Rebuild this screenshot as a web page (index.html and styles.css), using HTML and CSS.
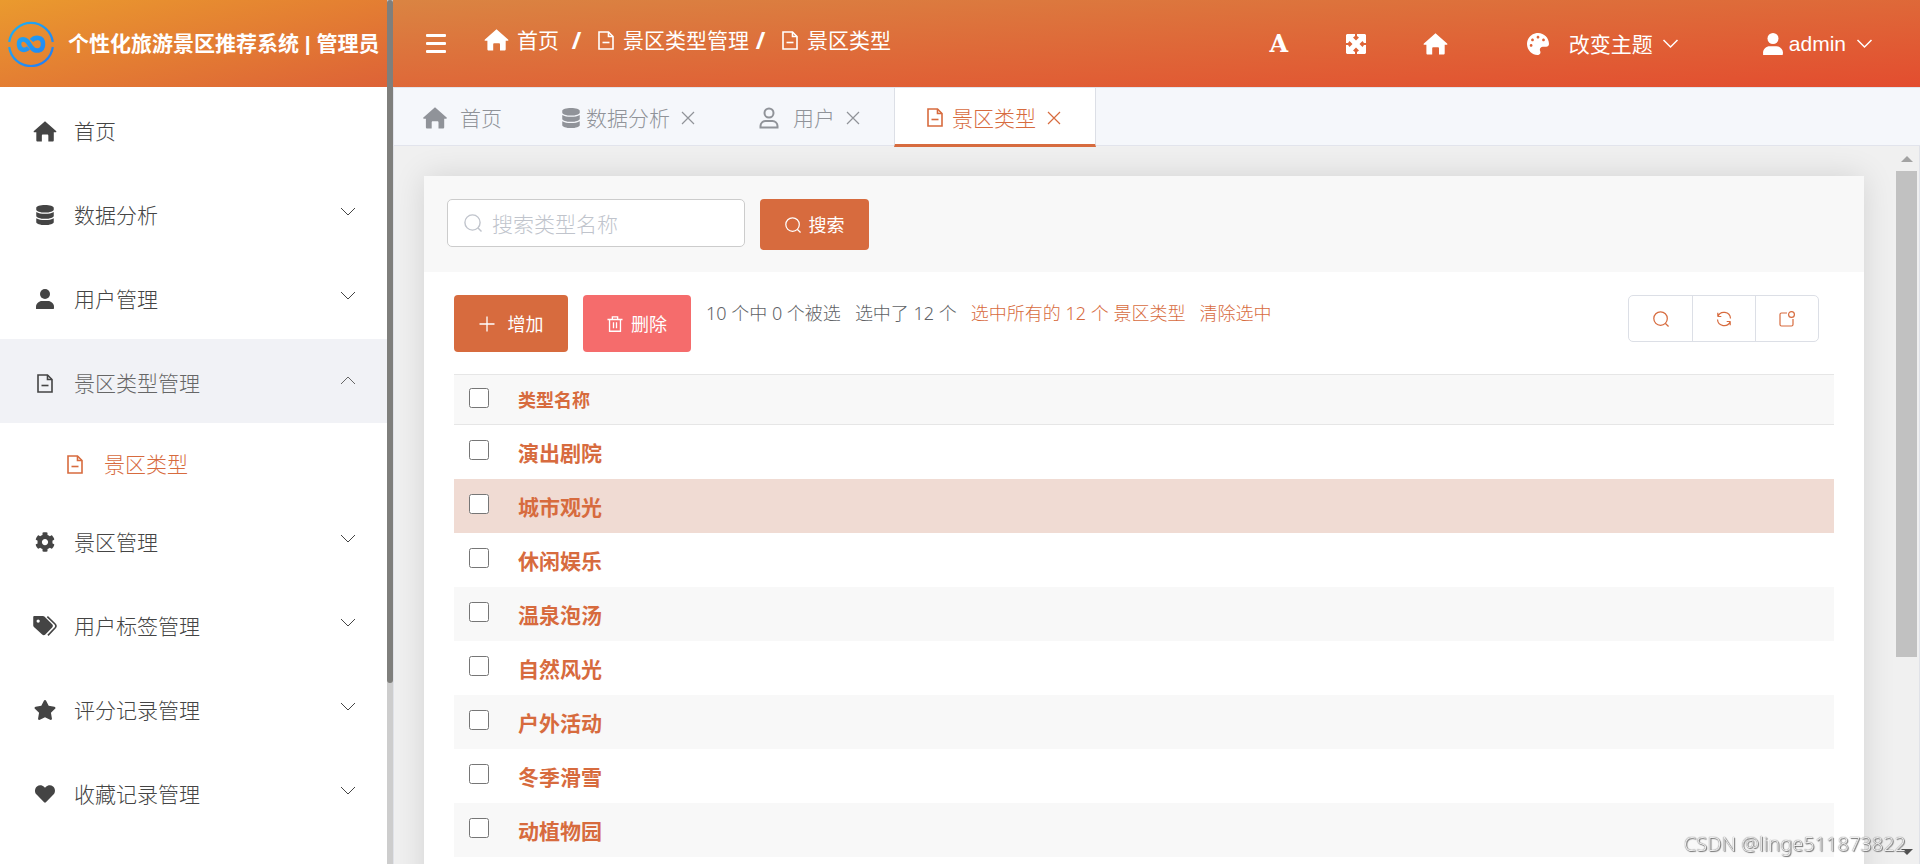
FILE: index.html
```html
<!DOCTYPE html>
<html lang="zh-CN">
<head>
<meta charset="utf-8">
<title>景区类型 | 个性化旅游景区推荐系统</title>
<link rel="stylesheet" href="styles.css">
</head>
<body>
<svg class="sprite" aria-hidden="true">
  <symbol id="i-home" viewBox="0 0 24 22"><path d="M12 .3 23.6 10.4c.6.6.3 1.4-.6 1.4h-1.800v8.400c0 .9-.5 1.400-1.400 1.400h-4.300v-6.200c0-.8-.4-1.200-1.200-1.200H9.900c-.8 0-1.200.4-1.200 1.200v6.200H4.300c-.9 0-1.400-.5-1.400-1.400v-8.400H1c-.9 0-1.200-.8-.6-1.400z"/></symbol>
  <symbol id="i-db" viewBox="0 0 448 512"><path d="M448 73.143v45.714C448 159.143 347.667 192 224 192S0 159.143 0 118.857V73.143C0 32.857 100.333 0 224 0s224 32.857 224 73.143zM448 176v102.857C448 319.143 347.667 352 224 352S0 319.143 0 278.857V176c48.125 33.143 136.208 48.572 224 48.572S399.874 209.143 448 176zm0 160v102.857C448 479.143 347.667 512 224 512S0 479.143 0 438.857V336c48.125 33.143 136.208 48.572 224 48.572S399.874 369.143 448 336z"/></symbol>
  <symbol id="i-user" viewBox="0 0 18 20"><circle cx="9" cy="5" r="5"/><path d="M0 20v-2.500C0 14.500 3 12 6 12h6c3 0 6 2.500 6 5.500V19c0 .7-.3 1-1 1z"/></symbol>
  <symbol id="i-user-o" viewBox="0 0 20 22"><g fill="none" stroke="currentColor" stroke-width="2"><circle cx="10" cy="6" r="4.500"/><path d="M1.500 20.500v-1.500c0-3 2.500-5 5-5h7c2.500 0 5 2 5 5v1.500z"/></g></symbol>
  <symbol id="i-doc" viewBox="0 0 16 19"><g fill="none" stroke="currentColor" stroke-width="1.600"><path d="M1 1h9.500L15 5.500V18H1z"/><path d="M10.500 1v4.500H15"/><path d="M4.500 11.500h7"/></g></symbol>
  <symbol id="i-cog" viewBox="0 0 512 512"><path fill-rule="evenodd" d="M487.400 315.700l-42.600-24.600c4.300-23.200 4.300-47 0-70.200l42.600-24.600c4.900-2.800 7.100-8.600 5.500-14-11.100-35.600-30-67.800-54.700-94.600-3.800-4.100-10-5.100-14.800-2.300L380.800 110c-17.900-15.400-38.500-27.300-60.800-35.100V25.800c0-5.600-3.900-10.500-9.400-11.700-36.700-8.200-74.300-7.800-109.200 0-5.500 1.200-9.400 6.100-9.400 11.700V75c-22.200 7.900-42.800 19.800-60.800 35.100L88.700 85.500c-4.900-2.800-11-1.900-14.800 2.300-24.700 26.700-43.600 58.900-54.700 94.600-1.700 5.400.6 11.200 5.500 14L67.300 221c-4.300 23.200-4.300 47 0 70.200l-42.600 24.600c-4.900 2.800-7.100 8.600-5.500 14 11.100 35.600 30 67.800 54.700 94.600 3.800 4.100 10 5.100 14.800 2.300l42.600-24.600c17.900 15.400 38.500 27.300 60.800 35.100v49.200c0 5.600 3.900 10.500 9.400 11.700 36.700 8.200 74.300 7.800 109.200 0 5.500-1.200 9.400-6.100 9.400-11.700v-49.200c22.200-7.900 42.800-19.800 60.800-35.100l42.600 24.600c4.900 2.800 11 1.900 14.800-2.300 24.700-26.700 43.600-58.900 54.700-94.600 1.500-5.500-.7-11.300-5.600-14.100zM256 336c-44.100 0-80-35.900-80-80s35.900-80 80-80 80 35.900 80 80-35.900 80-80 80z"/></symbol>
  <symbol id="i-tags" viewBox="0 0 20 17"><path fill-rule="evenodd" d="M.8 0h7.400c.5 0 .9.200 1.300.5l6.600 6.600c.8.800.8 1.900 0 2.700l-5.800 6c-.8.800-1.900.8-2.700 0L.6 9.300C.2 8.900 0 8.500 0 8V.8C0 .3.300 0 .8 0zM4.200 2.900a1.400 1.400 0 1 0 0 2.800 1.400 1.400 0 0 0 0-2.800z"/><path fill="none" stroke="currentColor" stroke-width="1.400" d="M12 .5l6.500 6.300c1 1 1 2.300 0 3.400L12.500 16.500"/></symbol>
  <symbol id="i-star" viewBox="0 0 576 512"><path d="M259.300 17.800L194 150.200 47.900 171.500c-26.200 3.800-36.700 36.100-17.700 54.600l105.700 103-25 145.500c-4.500 26.300 23.200 46 46.400 33.700L288 439.600l130.700 68.700c23.200 12.200 50.900-7.400 46.400-33.700l-25-145.500 105.700-103c19-18.500 8.500-50.800-17.700-54.600L382 150.200 316.700 17.800c-11.700-23.600-45.600-23.900-57.400 0z"/></symbol>
  <symbol id="i-heart" viewBox="0 0 512 512"><path d="M462.300 62.600C407.500 15.900 326 24.300 275.700 76.200L256 96.500l-19.700-20.300C186.100 24.300 104.500 15.900 49.700 62.600c-62.800 53.600-66.100 149.800-9.900 207.900l193.500 199.800c12.500 12.900 32.800 12.900 45.300 0l193.500-199.800c56.300-58.100 53-154.300-9.800-207.900z"/></symbol>
  <symbol id="i-palette" viewBox="0 0 512 512"><path fill-rule="evenodd" d="M204.300 5C104.900 24.400 24.800 104.300 5.200 203.400c-37 187 131.700 326.400 258.800 306.700 41.200-6.400 61.400-54.600 42.500-91.700-23.100-45.400 9.900-98.400 60.900-98.400h79.700c35.800 0 64.800-29.600 64.900-65.300C511.500 97.100 368.100-26.900 204.300 5zM96 320c-17.700 0-32-14.300-32-32s14.300-32 32-32 32 14.300 32 32-14.300 32-32 32zm32-128c-17.700 0-32-14.300-32-32s14.300-32 32-32 32 14.300 32 32-14.300 32-32 32zm128-64c-17.700 0-32-14.300-32-32s14.300-32 32-32 32 14.300 32 32-14.300 32-32 32zm128 64c-17.700 0-32-14.300-32-32s14.300-32 32-32 32 14.300 32 32-14.300 32-32 32z"/></symbol>
  <symbol id="i-expand" viewBox="0 0 20 20"><path d="M1 0H9v2L7 3.500 10 6.500 13 3.500 11 2V0h8l1 1V9H18L16.500 7l-3 3 3 3L18 11h2v8l-1 1H11V18l2-1.500-3-3-3 3L9 18v2H1l-1-1V11H2l1.500 2 3-3-3-3L2 9H0V1z"/></symbol>
  <symbol id="i-down" viewBox="0 0 16 10"><path fill="none" stroke="currentColor" d="M1 1l7 7 7-7"/></symbol>
  <symbol id="i-close" viewBox="0 0 14 14"><path fill="none" stroke="currentColor" stroke-width="1.200" d="M1 1l12 12M13 1L1 13"/></symbol>
  <symbol id="i-search" viewBox="0 0 18 18"><g fill="none" stroke="currentColor" stroke-width="1.400"><circle cx="8.500" cy="8.500" r="7.600"/><path d="M14 14l3.500 3.500"/></g></symbol>
  <symbol id="i-plus" viewBox="0 0 16 16"><path fill="none" stroke="currentColor" stroke-width="1.300" d="M8 .5v15M.5 8h15"/></symbol>
  <symbol id="i-trash" viewBox="0 0 16 17"><path fill="none" stroke="currentColor" stroke-width="1.400" d="M0 3.700h16M2.200 3.700v12.500h11.600V3.700M5.200 3.500V.9h5.600v2.600M6.400 6.700v6.300M9.600 6.700v6.300"/></symbol>
  <symbol id="i-refresh" viewBox="0 0 16 16"><g fill="none" stroke="currentColor" stroke-width="1.200"><path d="M1.500 5.500h3.800M1.800 1.800v3.700A6.600 6.600 0 0 1 14.500 7.500M14.500 10.500h-3.800M14.200 14.200v-3.700A6.600 6.600 0 0 1 1.500 8.500"/></g></symbol>
  <symbol id="i-badge" viewBox="0 0 16 16"><g fill="none" stroke="currentColor" stroke-width="1.200"><path d="M8 2H2.500C1.500 2 1 2.500 1 3.500v10c0 1 .5 1.500 1.500 1.500h10c1 0 1.500-.5 1.500-1.500V8"/><circle cx="12.500" cy="3.500" r="2.900"/></g></symbol>
</svg>

<div class="app">
  <aside class="side">
    <header class="brand">
      <svg class="logo" viewBox="0 0 46 46" aria-hidden="true">
        <defs><linearGradient id="lg" x1="0" y1="0" x2="46" y2="46" gradientUnits="userSpaceOnUse"><stop offset="0" stop-color="#1fb4f0"/><stop offset="1" stop-color="#2478f5"/></linearGradient></defs>
        <g fill="none" stroke="url(#lg)"><path stroke-width="2.200" d="M1.200 21A22 22 0 0 1 44.800 21M1.200 26A22 22 0 0 0 44.800 26"/><path stroke-width="4.600" d="M23.500 19.500c3-3.500 11.500-4.500 11.500 3.500s-8 8-11.500 3.500l-4-6c-3.500-3.500-8.500-2.500-8.500 2.500s4.500 8 9.500 4"/></g>
      </svg>
      <h1 class="brand-name">个性化旅游景区推荐系统 | 管理员</h1>
    </header>
    <nav class="menu">
      <a class="item" href="#"><svg class="ic ic-home"><use href="#i-home"/></svg><span>首页</span></a>
      <a class="item" href="#"><svg class="ic"><use href="#i-db"/></svg><span>数据分析</span><svg class="arrow"><use href="#i-down"/></svg></a>
      <a class="item" href="#"><svg class="ic"><use href="#i-user"/></svg><span>用户管理</span><svg class="arrow"><use href="#i-down"/></svg></a>
      <a class="item open" href="#"><svg class="ic ic-doc"><use href="#i-doc"/></svg><span>景区类型管理</span><svg class="arrow"><use href="#i-down"/></svg></a>
      <a class="item sub" href="#"><svg class="ic ic-doc"><use href="#i-doc"/></svg><span>景区类型</span></a>
      <a class="item" href="#"><svg class="ic"><use href="#i-cog"/></svg><span>景区管理</span><svg class="arrow"><use href="#i-down"/></svg></a>
      <a class="item" href="#"><svg class="ic"><use href="#i-tags"/></svg><span>用户标签管理</span><svg class="arrow"><use href="#i-down"/></svg></a>
      <a class="item" href="#"><svg class="ic"><use href="#i-star"/></svg><span>评分记录管理</span><svg class="arrow"><use href="#i-down"/></svg></a>
      <a class="item" href="#"><svg class="ic"><use href="#i-heart"/></svg><span>收藏记录管理</span><svg class="arrow"><use href="#i-down"/></svg></a>
    </nav>
  </aside>
  <div class="side-scroll"><div class="side-thumb"></div></div>

  <div class="main">
    <header class="top">
      <button class="fold" aria-label="折叠菜单"><i></i><i></i><i></i></button>
      <nav class="crumbs">
        <a href="#"><svg class="ic-crumb-home"><use href="#i-home"/></svg>首页</a><b>/</b>
        <a href="#"><svg class="ic-doc"><use href="#i-doc"/></svg>景区类型管理</a><b>/</b>
        <a href="#"><svg class="ic-doc"><use href="#i-doc"/></svg>景区类型</a>
      </nav>
      <div class="tools">
        <button class="tool font" aria-label="字体">A</button>
        <button class="tool" aria-label="全屏"><svg class="s20"><use href="#i-expand"/></svg></button>
        <button class="tool" aria-label="首页"><svg class="ic-crumb-home"><use href="#i-home"/></svg></button>
        <button class="tool theme"><svg class="s22"><use href="#i-palette"/></svg><span>改变主题</span><svg class="caret"><use href="#i-down"/></svg></button>
        <button class="tool account"><svg class="s22"><use href="#i-user"/></svg><span>admin</span><svg class="caret"><use href="#i-down"/></svg></button>
      </div>
    </header>

    <nav class="tabs">
      <a class="tab" href="#"><svg class="ic-tab-home"><use href="#i-home"/></svg><span class="wide">首页</span></a>
      <a class="tab" href="#"><svg class="s20"><use href="#i-db"/></svg><span>数据分析</span><svg class="close"><use href="#i-close"/></svg></a>
      <a class="tab" href="#"><svg class="s22"><use href="#i-user-o"/></svg><span class="wide">用户</span><svg class="close"><use href="#i-close"/></svg></a>
      <a class="tab active" href="#"><svg class="ic-doc"><use href="#i-doc"/></svg><span>景区类型</span><svg class="close"><use href="#i-close"/></svg></a>
    </nav>

    <div class="body">
      <main class="card">
        <form class="search">
          <label class="field"><svg class="s18"><use href="#i-search"/></svg><input type="text" placeholder="搜索类型名称" aria-label="搜索类型名称"></label>
          <button class="btn" type="button"><svg class="s16"><use href="#i-search"/></svg>搜索</button>
        </form>
        <section class="content">
          <div class="actions">
            <button class="btn add"><svg class="s16"><use href="#i-plus"/></svg>增加</button>
            <button class="btn del"><svg class="s16"><use href="#i-trash"/></svg>删除</button>
            <p class="info"><span>10 个中 0 个被选</span><span>选中了 12 个</span><a href="#">选中所有的 12 个 景区类型</a><a href="#">清除选中</a></p>
            <div class="group">
              <button aria-label="搜索"><svg class="s16"><use href="#i-search"/></svg></button>
              <button aria-label="刷新"><svg class="s16"><use href="#i-refresh"/></svg></button>
              <button aria-label="新窗口"><svg class="s16"><use href="#i-badge"/></svg></button>
            </div>
          </div>
          <table class="grid">
            <thead><tr><th class="pick"><input type="checkbox" aria-label="全选"></th><th>类型名称</th></tr></thead>
            <tbody>
              <tr><td class="pick"><input type="checkbox" aria-label="演出剧院"></td><td><a href="#">演出剧院</a></td></tr>
              <tr class="hover"><td class="pick"><input type="checkbox" aria-label="城市观光"></td><td><a href="#">城市观光</a></td></tr>
              <tr><td class="pick"><input type="checkbox" aria-label="休闲娱乐"></td><td><a href="#">休闲娱乐</a></td></tr>
              <tr><td class="pick"><input type="checkbox" aria-label="温泉泡汤"></td><td><a href="#">温泉泡汤</a></td></tr>
              <tr><td class="pick"><input type="checkbox" aria-label="自然风光"></td><td><a href="#">自然风光</a></td></tr>
              <tr><td class="pick"><input type="checkbox" aria-label="户外活动"></td><td><a href="#">户外活动</a></td></tr>
              <tr><td class="pick"><input type="checkbox" aria-label="冬季滑雪"></td><td><a href="#">冬季滑雪</a></td></tr>
              <tr><td class="pick"><input type="checkbox" aria-label="动植物园"></td><td><a href="#">动植物园</a></td></tr>
            </tbody>
          </table>
        </section>
      </main>
      <div class="scroll"><span class="up"></span><div class="thumb"></div><span class="down"></span></div>
    </div>
  </div>
</div>
<div class="watermark">CSDN @linge511873822</div>
</body>
</html>
```
FILE: styles.css
```css
* { box-sizing: border-box; }
body {
  margin: 0;
  font-family: "Noto Sans", "Noto Sans CJK SC", sans-serif;
  font-weight: 300;
  font-size: 21px;
  line-height: 30px;
  color: #444;
  overflow: hidden;
}
a { color: inherit; text-decoration: none; }
button { font: inherit; color: inherit; border: 0; background: none; padding: 0; cursor: pointer; }
svg { flex: none; fill: currentColor; }
.sprite { position: absolute; width: 0; height: 0; }

.s16 { width: 16px; height: 16px; }
.s18 { width: 18px; height: 18px; }
.s20 { width: 20px; height: 20px; }
.s22 { width: 22px; height: 22px; }
.ic-crumb-home { width: 25px; height: 22px; }
.ic-tab-home { width: 24px; height: 22px; }

.app { display: flex; height: 100vh; }

/* sidebar */
.side { width: 387px; flex: none; background: #fff; overflow: hidden; }
.brand {
  display: flex;
  align-items: center;
  gap: 14px;
  height: 87px;
  padding-left: 8px;
  background: linear-gradient(to bottom right, #ea9a2e, #dd6237);
}
.logo { width: 46px; height: 46px; }
.brand-name {
  margin: 0;
  font-family: "Liberation Sans", "Noto Sans CJK SC", sans-serif;
  font-size: 21px;
  font-weight: 700;
  color: #fff;
  white-space: nowrap;
}
.item {
  display: flex;
  align-items: center;
  height: 84px;
  padding: 4px 31px 0 30px;
}
.ic { width: 30px; height: 20px; margin-right: 14px; }
.ic-home { height: 21px; }
.ic-doc { height: 19px; }
.arrow { width: 16px; height: 10px; margin: 0 0 6px auto; }
.open { background: #f1f2f6; color: #666; }
.open .ic { color: #444; }
.open .arrow { transform: rotate(180deg); }
.sub { height: 75px; padding: 7px 31px 0 60px; color: #d76b3e; }

.side-scroll { width: 6px; flex: none; background: #cdcdcd; }
.side-thumb { height: 79%; background: #7f7f7c; border-radius: 3px; }

/* header */
.main { flex: 1; min-width: 0; display: flex; flex-direction: column; }
.top {
  display: flex;
  align-items: center;
  height: 87px;
  flex: none;
  padding: 0 47px 0 33px;
  color: #fff;
  background: linear-gradient(to bottom right, #da8442, #e34d2f);
}
.fold { display: grid; gap: 5px; width: 20px; }
.fold i { height: 3px; border-radius: 1px; background: #fff; }
.crumbs { display: flex; align-items: center; margin: 0 auto 7px 38px; font-weight: 400; }
.crumbs a { display: flex; align-items: center; gap: 8px; }
.crumbs b { width: 11px; margin: 0 15px 0 12px; font-size: 23px; text-align: center; }
.crumbs a + b ~ a + b { margin-left: 6px; }
.crumbs .ic-doc { width: 18px; }
.tools { display: flex; align-items: center; }
.tool { display: flex; align-items: center; justify-content: center; min-width: 20px; }
.font { font-family: "DejaVu Serif", serif; font-weight: 700; font-size: 24px; }
.tools .tool + .tool { margin-left: 57px; }
.tools .tool + .theme { margin-left: 79px; }
.tools .tool + .account { margin-left: 83px; }
.theme span { margin: 0 9px 0 20px; font-weight: 400; }
.account span { margin: 0 10px 0 5px; font-family: "Liberation Sans", sans-serif; font-weight: 400; }
.caret { width: 17px; height: 10px; stroke-width: 1.500; }

/* tabs */
.tabs {
  position: relative;
  z-index: 1;
  display: flex;
  height: 59px;
  flex: none;
  background: #f5f7fb;
  border: solid #e2e4ec;
  border-width: 1px 0 1px 1px;
  color: #909399;
}
.tab { display: flex; align-items: center; height: 59px; padding: 0 34px 0 29px; gap: 5px; }
.tab:first-child { padding-right: 30px; }
.tab .wide { margin-left: 8px; }
.close { width: 14px; height: 14px; margin-left: 6px; }
.tab .ic-doc { width: 18px; margin-right: 3px; }
.active {
  padding: 3px 34px 0 31px;
  color: #d76b3e;
  background: #fff;
  border: solid #dcdfe6;
  border-width: 0 1px;
  border-bottom: 3px solid #d76b3e;
}

/* content */
.body { flex: 1; min-height: 0; display: flex; background: #f0f0f0; border: solid #e0e2e8; border-width: 0 1px; overflow: hidden; }
.card { flex: 1; align-self: flex-start; min-width: 0; margin: 30px 32px 0 30px; background: #fff; box-shadow: 0 0 30px rgba(0, 0, 0, .12); }
.search { display: flex; gap: 15px; height: 96px; padding: 23px; background: #f8f8f8; }
.field {
  display: flex;
  align-items: center;
  gap: 10px;
  width: 298px;
  height: 48px;
  padding: 0 16px;
  border: 1px solid #ccc;
  border-radius: 5px;
  background: #fff;
  color: #c0c4cc;
}
.field input { width: 100%; min-width: 0; padding: 2px 0 0; border: 0; outline: 0; background: none; font: inherit; color: #606266; }
.field input::placeholder { color: #c0c4cc; }
.btn {
  display: flex;
  align-items: center;
  justify-content: center;
  gap: 8px;
  width: 109px;
  height: 51px;
  border-radius: 4px;
  background: #d76b3e;
  color: #fff;
  font-size: 18px;
  font-weight: 400;
}
.content { padding: 23px 30px 80px; }
.actions { display: flex; align-items: flex-start; gap: 15px; }
.add, .del { height: 57px; }
.add { width: 114px; gap: 13px; }
.del { width: 108px; background: #f56c6c; }
.info { display: flex; gap: 14px; margin: 3px 0 0; font-size: 18px; color: #606266; white-space: nowrap; }
.info a { color: #d76b3e; }
.group { display: flex; margin: 0 15px 0 auto; border: 1px solid #dcdfe6; border-radius: 5px; color: #d76b3e; }
.group button { display: grid; place-items: center; width: 63px; height: 45px; }
.group button + button { border-left: 1px solid #dcdfe6; }

.grid { width: 100%; margin-top: 22px; border-collapse: collapse; color: #d76b3e; font-weight: 700; text-align: left; }
.grid th { height: 50px; padding: 0; border: solid #e6e6e6; border-width: 1px 0; font-size: 18px; background: #f8f8f8; }
.grid td { height: 54px; padding: 2px 0 0; }
.grid .pick { width: 64px; padding: 0 0 4px 15px; line-height: 0; }
.grid input { width: 20px; height: 20px; margin: 0; vertical-align: middle; }
.grid tbody tr:nth-child(even) { background: #f8f8f8; }
.grid tbody tr.hover:nth-child(n) { background: #f0dbd3; }

.scroll { display: flex; flex-direction: column; align-items: center; width: 21px; margin: 10px 2px 9px 0; }
.up, .down { border: solid transparent; border-width: 0 6px; }
.up { border-bottom: 6px solid #a3a3a3; margin-bottom: 9px; }
.down { border-top: 6px solid #505050; margin-top: auto; }
.thumb { width: 100%; height: 69.5%; background: #c1c1c1; }

.watermark {
  position: fixed;
  right: 14px;
  bottom: 5px;
  font-family: "Noto Sans", sans-serif;
  font-size: 20px;
  color: rgba(255, 255, 255, .9);
  text-shadow: 0 0 1px #333, 1px 1px 1px #777;
}
```
